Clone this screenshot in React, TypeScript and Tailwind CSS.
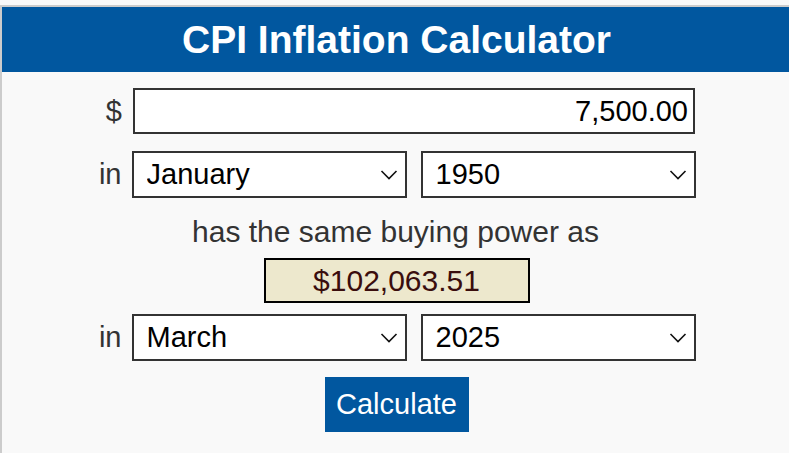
import React from 'react';

function Chevron() {
  return (
    <svg
      className="pointer-events-none absolute right-[9px] top-1/2 -translate-y-1/2"
      width="18"
      height="11"
      viewBox="0 0 18 11"
      fill="none"
    >
      <path d="M1.5 1.5 L9 9 L16.5 1.5" stroke="#111" strokeWidth="1.6" />
    </svg>
  );
}

function Select({ value, options }: { value: string; options: string[] }) {
  return (
    <div className="relative w-[275px] h-[47px]">
      <select
        defaultValue={value}
        className="w-full h-full appearance-none bg-white border-2 border-[#333] pl-[13px] text-[29px] text-black outline-none"
      >
        {options.map((o) => (
          <option key={o}>{o}</option>
        ))}
      </select>
      <Chevron />
    </div>
  );
}

const months = [
  'January', 'February', 'March', 'April', 'May', 'June',
  'July', 'August', 'September', 'October', 'November', 'December',
];
const years = ['1950', '2025'];

export default function App() {
  return (
    <div className="min-h-[453px] bg-[#f9f9f9] pt-[5px] font-['Liberation_Sans',Arial,sans-serif]">
      <div className="border-t-2 border-l-2 border-[#ccc] min-h-[448px] bg-[#f9f9f9]">
        <div className="h-[65px] bg-[#01579f] flex items-center justify-center">
          <h1 className="text-white font-bold text-[39px] leading-none ml-[2px]">CPI Inflation Calculator</h1>
        </div>

        <div className="flex flex-col items-center pt-[16px] pr-[4px]">
          <div className="flex items-center">
            <span className="w-[30px] text-right mr-[11px] text-[29px] leading-none text-[#333]">$</span>
            <input
              defaultValue="7,500.00"
              className="w-[562px] h-[46px] bg-white border-2 border-[#333] text-right pr-[5px] text-[29px] text-black outline-none"
            />
          </div>

          <div className="flex items-center mt-[17px]">
            <span className="w-[30px] text-right mr-[10px] text-[29px] leading-none text-[#333]">in</span>
            <div className="flex gap-[14px]">
              <Select value="January" options={months} />
              <Select value="1950" options={years} />
            </div>
          </div>

          <p className="mt-[18px] text-[30px] leading-[32px] text-[#333] ml-[4px]">has the same buying power as</p>

          <div className="mt-[10px] ml-[6px] w-[266px] h-[45px] bg-[#ede8cd] border-2 border-black flex items-center justify-center text-[30px] text-[#3a0d0d]">
            $102,063.51
          </div>

          <div className="flex items-center mt-[11px]">
            <span className="w-[30px] text-right mr-[10px] text-[29px] leading-none text-[#333]">in</span>
            <div className="flex gap-[14px]">
              <Select value="March" options={months} />
              <Select value="2025" options={years} />
            </div>
          </div>

          <button className="mt-[16px] ml-[6px] h-[55px] w-[144px] bg-[#01579f] text-white text-[29px]">
            Calculate
          </button>
        </div>
      </div>
    </div>
  );
}
